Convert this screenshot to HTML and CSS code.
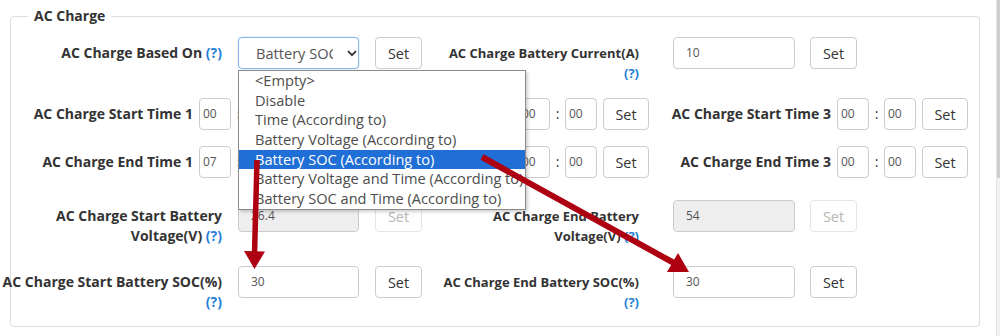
FILE: index.html
```html
<!DOCTYPE html>
<html>
<head>
<meta charset="utf-8">
<link rel="stylesheet" href="styles.css">
</head>
<body>
<div class="page">
  <main class="main">
    <fieldset class="box">
      <legend class="legend">AC Charge</legend>

      <div class="row r1">
        <div class="grp">
          <div class="lbl w1"><span>AC Charge Based On <span class="q">(?)</span></span></div>
          <div class="select">
            <span class="sel-text">Battery SOC (According to)</span>
            <svg class="chev" width="10" height="7" viewBox="0 0 10 7"><path d="M1 1.2 L5 5.2 L9 1.2" fill="none" stroke="#333" stroke-width="1.8"/></svg>
          </div>
          <button class="btn">Set</button>
        </div>
        <div class="grp g2">
          <div class="lbl w2"><span>AC Charge Battery Current(A)<br><span class="q">(?)</span></span></div>
          <div class="inp wide">10</div>
          <button class="btn b2">Set</button>
        </div>
      </div>

      <div class="row r2">
        <div class="tgrp">
          <div class="lbl wt"><span>AC Charge Start Time 1</span></div>
          <div class="inp tm">00</div><span class="colon">:</span><div class="inp tm">00</div>
          <button class="btn tb">Set</button>
        </div>
        <div class="tgrp">
          <div class="lbl wt"><span>AC Charge Start Time 2</span></div>
          <div class="inp tm">00</div><span class="colon">:</span><div class="inp tm">00</div>
          <button class="btn tb">Set</button>
        </div>
        <div class="tgrp">
          <div class="lbl wt"><span>AC Charge Start Time 3</span></div>
          <div class="inp tm">00</div><span class="colon">:</span><div class="inp tm">00</div>
          <button class="btn tb">Set</button>
        </div>
      </div>

      <div class="row r3">
        <div class="tgrp">
          <div class="lbl wt"><span>AC Charge End Time 1</span></div>
          <div class="inp tm">07</div><span class="colon">:</span><div class="inp tm">00</div>
          <button class="btn tb">Set</button>
        </div>
        <div class="tgrp">
          <div class="lbl wt"><span>AC Charge End Time 2</span></div>
          <div class="inp tm">00</div><span class="colon">:</span><div class="inp tm">00</div>
          <button class="btn tb">Set</button>
        </div>
        <div class="tgrp">
          <div class="lbl wt"><span>AC Charge End Time 3</span></div>
          <div class="inp tm">00</div><span class="colon">:</span><div class="inp tm">00</div>
          <button class="btn tb">Set</button>
        </div>
      </div>

      <div class="row r4">
        <div class="grp">
          <div class="lbl w1"><span>AC Charge Start Battery<br>Voltage(V) <span class="q">(?)</span></span></div>
          <div class="inp mid dis">26.4</div>
          <button class="btn dbtn">Set</button>
        </div>
        <div class="grp g2">
          <div class="lbl w2"><span>AC Charge End Battery<br>Voltage(V) <span class="q">(?)</span></span></div>
          <div class="inp wide dis">54</div>
          <button class="btn b2 dbtn">Set</button>
        </div>
      </div>

      <div class="row r5">
        <div class="grp">
          <div class="lbl w1"><span>AC Charge Start Battery SOC(%)<br><span class="q">(?)</span></span></div>
          <div class="inp mid">30</div>
          <button class="btn">Set</button>
        </div>
        <div class="grp g2">
          <div class="lbl w2"><span>AC Charge End Battery SOC(%)<br><span class="q">(?)</span></span></div>
          <div class="inp wide">30</div>
          <button class="btn b2">Set</button>
        </div>
      </div>
    </fieldset>
  </main>
  <div class="scroll"><div class="thumb"></div></div>

  <ul class="dropdown">
    <li>&lt;Empty&gt;</li>
    <li>Disable</li>
    <li>Time (According to)</li>
    <li>Battery Voltage (According to)</li>
    <li class="hl">Battery SOC (According to)</li>
    <li>Battery Voltage and Time (According to)</li>
    <li>Battery SOC and Time (According to)</li>
  </ul>

  <svg class="arrows" width="1000" height="336" viewBox="0 0 1000 336">
    <line x1="257" y1="160" x2="254.5" y2="254" stroke="#ad0010" stroke-width="5.5"/>
    <polygon points="244,251 265,251.5 254.5,269" fill="#ad0010"/>
    <line x1="482" y1="157" x2="674" y2="263" stroke="#ad0010" stroke-width="6"/>
    <polygon points="667,272 678,253 689,272" fill="#ad0010"/>
  </svg>
</div>
</body>
</html>
```

FILE: styles.css
```css
* { box-sizing: border-box; }
html, body { margin: 0; padding: 0; background: #fff; }
body {
  font-family: "Open Sans", "Noto Sans", "Liberation Sans", sans-serif;
  font-size: 14px;
  color: #333;
}
.page {
  position: relative;
  width: 1000px;
  height: 336px;
  overflow: hidden;
  display: flex;
}
.main {
  width: 996px;
  padding: 6px 0 0 10px;
}
.scroll {
  width: 4px;
  background: #f1f1f1;
  border-left: 1px solid #e4e4e4;
}
.thumb {
  height: 178px;
  background: #cdcdcd;
}
.box {
  margin: 0;
  width: 970px;
  padding: 11px 0 14px 0;
  border: 1px solid #ddd;
  border-radius: 4px;
  min-width: 0;
}
.legend {
  margin-left: 17px;
  padding: 0 6px;
  font-weight: 700;
  font-size: 14px;
  line-height: 20px;
  color: #333;
}
.row { display: flex; align-items: flex-start; }
.r2 { margin-top: 15px; }
.r3 { margin-top: 16px; }
.r4 { margin-top: 22px; }
.r5 { margin-top: 20px; }

.grp, .tgrp { display: flex; align-items: flex-start; flex: none; }
.g2 { margin-left: 18px; }

.lbl {
  display: flex;
  justify-content: flex-end;
  flex: none;
  padding-top: 6px;
  font-weight: 700;
  font-size: 14px;
  line-height: 20px;
  text-align: right;
  white-space: nowrap;
  color: #333;
}
.w1 { width: 211px; margin-right: 16px; }
.w2 { width: 199px; margin-right: 34px; font-size: 13px; }
.wt { width: 182px; margin-right: 6px; }
.q { color: #1f7fd6; font-weight: 700; }

.inp {
  flex: none;
  height: 32px;
  border: 1px solid #ccc;
  border-radius: 4px;
  background: #fff;
  font-size: 12px;
  line-height: 30px;
  color: #555;
  padding: 0 12px;
  white-space: nowrap;
  overflow: hidden;
}
.mid { width: 121px; }
.wide { width: 122px; }
.tm { width: 32px; padding: 0 3px; }
.dis { background: #eee; }
.colon {
  width: 15px;
  flex: none;
  text-align: center;
  line-height: 32px;
  font-size: 14px;
  color: #333;
}

.select {
  flex: none;
  width: 121px;
  height: 32px;
  border: 1px solid #86b7e8;
  border-radius: 4px;
  box-shadow: 0 0 2px rgba(102, 175, 233, 0.45);
  background: #fff;
  display: flex;
  align-items: center;
  padding-left: 17px;
  color: #555;
  font-size: 14.6px;
}
.sel-text {
  width: 77px;
  overflow: hidden;
  white-space: nowrap;
  line-height: 20px;
}
.chev { margin-left: 14px; }

.btn {
  flex: none;
  width: 47px;
  height: 32px;
  margin: 0 0 0 16px;
  padding: 0;
  border: 1px solid #ccc;
  border-radius: 4px;
  background: #fff;
  font-family: inherit;
  font-size: 14.4px;
  color: #333;
}
.b2 { margin-left: 15px; }
.tb { width: 46px; margin-left: 6px; }
.dbtn { color: #b5b5b5; border-color: #e6e6e6; }

.dropdown {
  position: absolute;
  left: 238px;
  top: 70px;
  width: 288px;
  margin: 0;
  padding: 0;
  list-style: none;
  background: #fff;
  border: 1px solid #8a8a8a;
  box-shadow: 2px 2px 3px rgba(0, 0, 0, 0.18);
  font-size: 14.6px;
  color: #4d4d4d;
}
.dropdown li {
  height: 19.7px;
  line-height: 19.7px;
  padding-left: 16px;
  white-space: nowrap;
  overflow: hidden;
}
.dropdown li.hl { background: #1f6fd6; color: #fff; }

.arrows {
  position: absolute;
  left: 0;
  top: 0;
  pointer-events: none;
}
```
